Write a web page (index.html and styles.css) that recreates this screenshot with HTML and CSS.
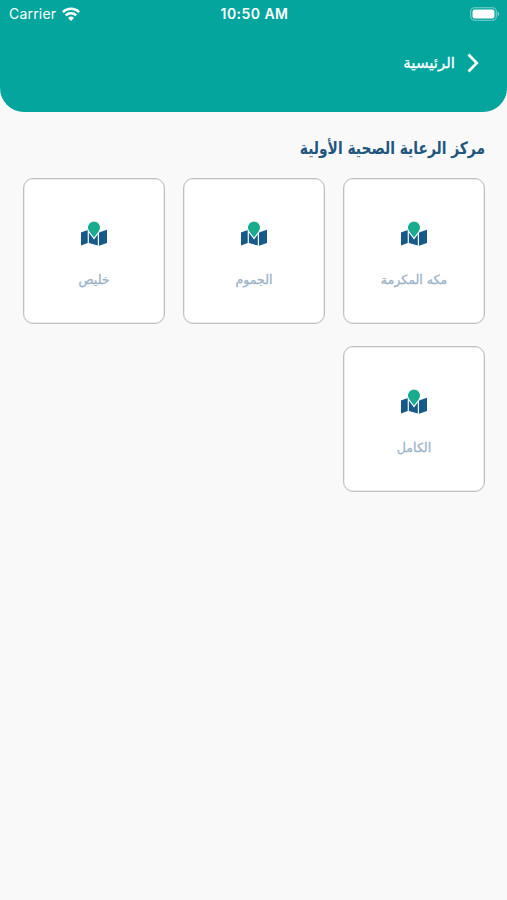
FILE: index.html
```html
<!DOCTYPE html>
<html lang="ar" dir="rtl">
<head>
<meta charset="utf-8">
<meta name="viewport" content="width=device-width, initial-scale=1">
<title>مركز الرعاية الصحية الأولية</title>
<link rel="stylesheet" href="styles.css">
</head>
<body>
<svg class="defs" aria-hidden="true">
  <symbol id="map" viewBox="0 0 26 26">
    <path fill="#155a8a" d="M0 11.4 6.7 9v13L0 24.5zM7.9 9.7 16.8 13v11.5L7.9 22zM18 11.5 26 8.7v13.4l-8 2.6z"/>
    <path fill="#1aaa8e" stroke="#fff" stroke-width="1.1" d="M13 17.6C10.6 14 6.4 10.4 6.4 6.6a6.6 6.6 0 0 1 13.2 0c0 3.8-4.2 7.4-6.6 11z"/>
  </symbol>
</svg>
<header class="header">
  <div class="status" dir="ltr">
    <div class="carrier"><span>Carrier</span>
      <svg class="wifi" viewBox="0 0 18 14"><g fill="none" stroke="#fff" stroke-width="2.5"><path d="M.8 5.1a11.7 11.7 0 0 1 16.4 0"/><path d="M3.8 8.4a7.5 7.5 0 0 1 10.4 0"/></g><path fill="#fff" d="M6 10.9a4.4 4.4 0 0 1 6 0L9 14z"/></svg>
    </div>
    <time class="time">10:50 AM</time>
    <svg class="battery" viewBox="0 0 30 14"><rect x=".7" y=".7" width="25.6" height="12.6" rx="3.8" fill="none" stroke="#7fd0cb" stroke-width="1.1"/><rect x="2.5" y="2.5" width="22" height="9" rx="2.2" fill="#fff"/><path fill="#7fd0cb" d="M27.6 4.6q3.2 2.4 0 4.8z"/></svg>
  </div>
  <nav class="back">
    <svg class="chevron" viewBox="0 0 12 20"><path d="m1.5 1.5 8.3 8.5-8.3 8.5" fill="none" stroke="#fff" stroke-width="2.7"/></svg>
    <span class="back-label">الرئيسية</span>
  </nav>
</header>
<main class="content">
  <h1 class="title"><span>مركز الرعاية الصحية الأولية</span></h1>
  <div class="grid">
    <div class="card"><svg class="icon"><use href="#map"/></svg><span class="label">مكه المكرمة</span></div>
    <div class="card"><svg class="icon"><use href="#map"/></svg><span class="label">الجموم</span></div>
    <div class="card"><svg class="icon"><use href="#map"/></svg><span class="label">خليص</span></div>
    <div class="card"><svg class="icon"><use href="#map"/></svg><span class="label">الكامل</span></div>
  </div>
</main>
</body>
</html>
```
FILE: styles.css
```css
* { box-sizing: border-box; }
body {
  margin: 0;
  min-height: 900px;
  background: #f9f9f9;
  font-family: "DejaVu Sans", sans-serif;
}
.defs { display: none; }
.header {
  height: 112px;
  background: #03a59d;
  border-radius: 0 0 24px 24px;
  color: #fff;
}
.status {
  display: grid;
  grid-template-columns: 1fr auto 1fr;
  align-items: center;
  height: 27px;
  padding: 0 7px 0 9px;
  font-family: Inter, sans-serif;
}
.carrier { display: flex; align-items: center; gap: 6px; font-size: 14px; letter-spacing: .2px; }
.wifi { width: 18px; height: 14px; }
.time { font-size: 14px; font-weight: 600; letter-spacing: .45px; }
.battery { width: 30px; height: 14px; justify-self: end; }
.back {
  display: flex;
  align-items: center;
  gap: 12px;
  padding: 26px 28px 0 0;
}
.chevron { width: 12px; height: 20px; }
.back-label { font-size: 15px; line-height: 20px; -webkit-text-stroke: .3px; }
.content { padding: 24px 22px 0 23px; }
.title {
  margin: 0;
  height: 42px;
  font-size: 17px;
  line-height: 24px;
  font-weight: 700;
  color: #21567f;
  white-space: nowrap;
}
.title span {
  display: inline-block;
  transform: scaleX(.812);
  transform-origin: right center;
}
.grid {
  display: grid;
  grid-template-columns: repeat(3, 142px);
  justify-content: space-between;
  row-gap: 22px;
}
.card {
  display: flex;
  flex-direction: column;
  align-items: center;
  height: 146px;
  padding-top: 42px;
  background: #fff;
  border: 1px solid #c0c0c0;
  border-radius: 10px;
  box-shadow: inset 0 0 0 .5px #d8d8d8;
}
.icon { width: 26px; height: 26px; }
.label {
  margin-top: 23px;
  font-size: 12.6px;
  line-height: 20px;
  color: #9cb3c9;
  -webkit-text-stroke: .3px;
}
```
